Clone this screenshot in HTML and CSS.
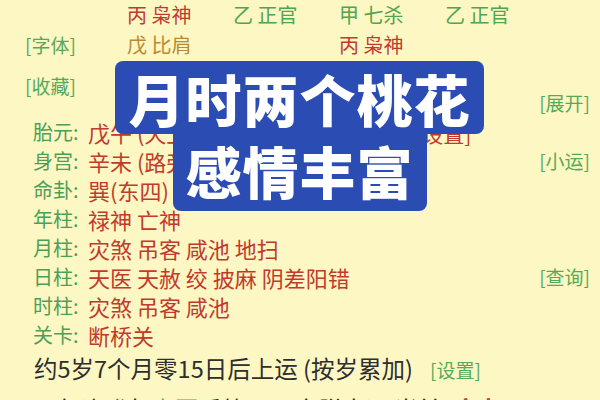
FILE: index.html
```html
<!DOCTYPE html>
<html lang="zh">
<head>
<meta charset="utf-8">
<link rel="stylesheet" href="styles.css">
</head>
<body>
<div class="page">
  <div class="pillars">
    <div></div>
    <div class="red">丙 枭神</div>
    <div class="green">乙 正官</div>
    <div class="green">甲 七杀</div>
    <div class="green">乙 正官</div>
    <div class="link">[字体]</div>
    <div class="brown">戊 比肩</div>
    <div></div>
    <div class="red">丙 枭神</div>
    <div></div>
  </div>
  <div class="links">
    <span class="link">[收藏]</span>
    <span class="link expand">[展开]</span>
  </div>
  <div class="details">
    <div class="row"><span class="lbl">胎元:</span><span class="val">戊午 (天上火) 命宫: 壬申 (剑 <span class="set">[设置]</span></span></div>
    <div class="row"><span class="lbl">身宫:</span><span class="val">辛未 (路旁土)</span><span class="link side">[小运]</span></div>
    <div class="row"><span class="lbl">命卦:</span><span class="val">巽(东四)</span></div>
    <div class="row"><span class="lbl">年柱:</span><span class="val">禄神 亡神</span></div>
    <div class="row"><span class="lbl">月柱:</span><span class="val">灾煞 吊客 咸池 地扫</span></div>
    <div class="row"><span class="lbl">日柱:</span><span class="val">天医 天赦 绞 披麻 阴差阳错</span><span class="link side">[查询]</span></div>
    <div class="row"><span class="lbl">时柱:</span><span class="val">灾煞 吊客 咸池</span></div>
    <div class="row"><span class="lbl">关卡:</span><span class="val">断桥关</span></div>
  </div>
  <div class="luck">约5岁7个月零15日后上运 (按岁累加) <span class="link small">[设置]</span></div>
  <div class="luck next">即每逢<span class="hot">癸</span>年<span class="cool">立夏</span>后第<span class="cool">22</span>天交脱大运 当前: <span class="hot strong">庚申</span></div>

  <div class="banner">
    <div class="b1">月时两个桃花</div>
    <div class="b2">感情丰富</div>
  </div>
</div>
</body>
</html>
```

FILE: styles.css
```css
html, body {
  margin: 0;
  padding: 0;
}
body {
  background: #fdf7c4;
  font-family: "Noto Sans CJK SC", "Noto Sans", sans-serif;
  width: 600px;
  height: 400px;
  overflow: hidden;
}
.page {
  position: relative;
  width: 600px;
  height: 400px;
  overflow: hidden;
}
.red { color: #c23a2c; }
.green { color: #4fa650; }
.brown { color: #b98a30; }
.link { color: #55aa5a; font-size: 19px; }

.pillars {
  display: grid;
  grid-template-columns: 102px repeat(4, 106px);
  grid-auto-rows: 29.5px;
  align-items: center;
  padding-left: 25px;
  font-size: 20px;
  line-height: 29px;
}
.links {
  display: flex;
  justify-content: space-between;
  align-items: flex-start;
  padding: 13px 10px 0 25px;
  height: 45px;
  line-height: 28px;
}
.links .expand {
  margin-top: 17px;
}
.details {
  padding: 0 10px 0 33px;
}
.row {
  display: flex;
  align-items: center;
  height: 29px;
  font-size: 20px;
  white-space: nowrap;
}
.lbl {
  color: #4c9f57;
  width: 55px;
  flex: none;
}
.val {
  color: #c23a2c;
  font-size: 22px;
  flex: 1;
}
.set { margin-left: 54px; font-size: 21px; }
.side { flex: none; }
.luck {
  padding-left: 34px;
  font-size: 23.5px;
  color: #2e2e2e;
  height: 38px;
  line-height: 38px;
  white-space: nowrap;
}
.luck .small { margin-left: 12px; font-size: 19px; }
.luck.next { padding-top: 4px; line-height: 36px; height: 36px; }
.hot { color: #d0332a; }
.cool { color: #4fb05a; }
.strong { font-weight: 700; }

.banner {
  position: absolute;
  left: 115px;
  top: 61px;
  width: 369px;
  display: flex;
  flex-direction: column;
  align-items: center;
  color: #fff;
  font-weight: 900;
  font-size: 56px;
}
.b1, .b2 {
  background: #2b4cb2;
  text-align: center;
  letter-spacing: 1px;
}
.b1 {
  width: 369px;
  height: 73px;
  line-height: 73px;
  border-radius: 8px;
}
.b2 {
  width: 254px;
  height: 77px;
  line-height: 72px;
  border-radius: 0 0 8px 8px;
}
```
